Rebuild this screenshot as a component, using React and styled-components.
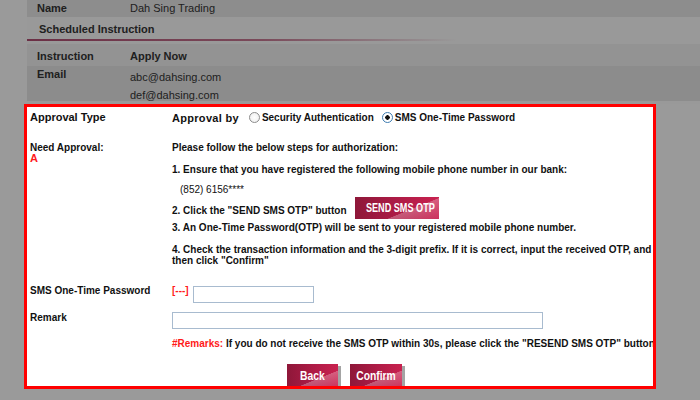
import React from 'react';
import styled, { createGlobalStyle } from 'styled-components';

const GlobalStyle = createGlobalStyle`
  html, body { margin: 0; padding: 0; }
  body {
    font-family: "Liberation Sans", Arial, sans-serif;
    background: #9a9a9a;
  }
`;

const Page = styled.div`
  width: 700px;
  height: 400px;
  overflow: hidden;
  background: #9a9a9a;
`;

// dimmed page behind the highlight box
const Summary = styled.div`
  margin-left: 27px;
  color: #202020;
  font-size: 11px;
`;

const InfoRow = styled.div`
  display: flex;
  height: ${(p) => p.$h}px;
  background: ${(p) => p.$bg};
  padding-left: 10px;
  box-sizing: border-box;
  padding-top: ${(p) => p.$pt || 0}px;
`;

const InfoLabel = styled.div`
  width: 93px;
  font-weight: bold;
  line-height: 13px;
`;

const InfoValue = styled.div`
  line-height: ${(p) => p.$lh || 13}px;
  font-weight: ${(p) => (p.$bold ? 'bold' : 'normal')};
`;

const Section = styled.div`
  height: 27px;
  background: #999;
  padding-top: 6px;
  box-sizing: border-box;
`;

const SectionTitle = styled.div`
  padding-left: 12px;
  font-weight: bold;
  line-height: 13px;
`;

const Underline = styled.div`
  margin-top: 3px;
  height: 2px;
  width: 430px;
  background: linear-gradient(to right, #6b2f45 0%, #7a4a5a 55%, rgba(150, 150, 150, 0) 100%);
`;

const Gap = styled.div`
  height: 3px;
  background: #999;
`;

const Box = styled.div`
  margin-left: 24px;
  width: 632px;
  height: 285px;
  box-sizing: border-box;
  border: 3px solid #ff0000;
  background: #fff;
  overflow: hidden;
  padding-left: 3px;
  color: #111;
`;

const Row = styled.div`
  display: grid;
  grid-template-columns: 142px 1fr;
  align-items: start;
  margin-top: ${(p) => p.$mt}px;
`;

const Label = styled.div`
  font-size: ${(p) => p.$size || 10}px;
  font-weight: bold;
  line-height: ${(p) => p.$lh || 12}px;
  margin-top: ${(p) => p.$mt || 0}px;
  white-space: nowrap;
`;

const RedMark = styled.div`
  color: #ff1a1a;
  font-size: 11px;
  font-weight: bold;
  line-height: 9px;
`;

const Choice = styled.div`
  display: flex;
  align-items: center;
  height: 13px;
  font-size: 10px;
  font-weight: bold;
  white-space: nowrap;
`;

const ChoiceTitle = styled.span`
  font-size: 11px;
  letter-spacing: 0.3px;
  margin-right: 10px;
`;

const Radio = styled.span`
  display: inline-block;
  width: 11px;
  height: 11px;
  box-sizing: border-box;
  border-radius: 50%;
  border: 1px solid ${(p) => (p.$on ? '#3d7bb0' : '#8c8c8c')};
  background: radial-gradient(circle, ${(p) => (p.$on ? '#111 0 2px, #fff 2.5px' : '#fff 0, #ececec 100%')});
  margin-right: 2px;
  margin-left: ${(p) => p.$ml || 0}px;
`;

const Steps = styled.div`
  font-size: 10px;
  font-weight: bold;
`;

const Line = styled.div`
  line-height: ${(p) => p.$lh || 12}px;
  margin-top: ${(p) => p.$mt || 0}px;
  padding-left: ${(p) => p.$indent || 0}px;
  font-weight: ${(p) => (p.$light ? 'normal' : 'bold')};
  white-space: nowrap;
`;

const ButtonLine = styled.div`
  display: flex;
  align-items: flex-start;
  margin-top: 1px;
  white-space: nowrap;
`;

const ButtonText = styled.span`
  padding-top: 8px;
  line-height: 12px;
`;

const Btn = styled.button`
  height: ${(p) => p.$h || 22}px;
  width: ${(p) => p.$w}px;
  margin-left: ${(p) => p.$ml || 0}px;
  padding: 0;
  border: none;
  color: #fff;
  font-family: "Liberation Sans", Arial, sans-serif;
  font-size: ${(p) => p.$fs || 12}px;
  font-weight: bold;
  cursor: pointer;
  background:
    linear-gradient(158deg, rgba(255, 255, 255, 0) 62%, rgba(255, 255, 255, 0.28) 63%, rgba(255, 255, 255, 0.08) 100%),
    linear-gradient(to right, #8e1739 0%, #b01c47 55%, #c9214f 100%);
  box-shadow: ${(p) => (p.$shade ? '3px 2px 0 #a4a4a4' : 'none')};
`;

const Squeeze = styled.span`
  display: inline-block;
  transform: scaleX(${(p) => p.$x || 0.76});
`;

const Field = styled.div`
  display: flex;
  align-items: flex-start;
  font-size: 10px;
  font-weight: bold;
`;

const Prefix = styled.span`
  color: #ff1a1a;
  line-height: 12px;
  margin-top: -1px;
  margin-right: 4px;
`;

const Input = styled.input`
  width: ${(p) => p.$w}px;
  height: 17px;
  box-sizing: border-box;
  border: 1px solid #a8bbcf;
  padding: 0 3px;
  margin: 0;
  outline: none;
`;

const Note = styled.div`
  font-size: 10px;
  font-weight: bold;
  line-height: 12px;
  white-space: nowrap;
`;

const Hash = styled.span`
  color: #ff1a1a;
`;

const Actions = styled.div`
  display: flex;
  justify-content: center;
  gap: 12px;
  margin-top: 14px;
  padding-left: 6px;
`;

export default function App() {
  return (
    <Page>
      <GlobalStyle />
      <Summary>
        <InfoRow $h={17} $bg="#8d8d8d" $pt={2}>
          <InfoLabel>Name</InfoLabel>
          <InfoValue>Dah Sing Trading</InfoValue>
        </InfoRow>
        <Section>
          <SectionTitle>Scheduled Instruction</SectionTitle>
          <Underline />
        </Section>
        <InfoRow $h={22} $bg="#939393" $pt={6}>
          <InfoLabel>Instruction</InfoLabel>
          <InfoValue $bold>Apply Now</InfoValue>
        </InfoRow>
        <InfoRow $h={35} $bg="#8c8c8c" $pt={2}>
          <InfoLabel>Email</InfoLabel>
          <InfoValue $lh={18}>
            abc@dahsing.com
            <br />
            def@dahsing.com
          </InfoValue>
        </InfoRow>
        <Gap />
      </Summary>

      <Box>
        <Row $mt={4}>
          <Label $size={11} $lh={13}>Approval Type</Label>
          <Choice>
            <ChoiceTitle>Approval by</ChoiceTitle>
            <Radio />
            Security Authentication
            <Radio $on $ml={8} />
            SMS One-Time Password
          </Choice>
        </Row>

        <Row $mt={18}>
          <div>
            <Label>Need Approval:</Label>
            <RedMark>A</RedMark>
          </div>
          <Steps>
            <Line>Please follow the below steps for authorization:</Line>
            <Line $mt={10}>1. Ensure that you have registered the following mobile phone number in our bank:</Line>
            <Line $mt={8} $indent={8} $light>(852) 6156****</Line>
            <ButtonLine>
              <ButtonText>2. Click the "SEND SMS OTP" button</ButtonText>
              <Btn $w={84} $ml={8}>
                <Squeeze>SEND SMS OTP</Squeeze>
              </Btn>
            </ButtonLine>
            <Line $mt={3}>3. An One-Time Password(OTP) will be sent to your registered mobile phone number.</Line>
            <Line $mt={10} $lh={11}>
              4. Check the transaction information and the 3-digit prefix. If it is correct, input the received OTP, and
              <br />
              then click "Confirm"
            </Line>
          </Steps>
        </Row>

        <Row $mt={20}>
          <Label $mt={-1}>SMS One-Time Password</Label>
          <Field>
            <Prefix>[---]</Prefix>
            <Input $w={121} />
          </Field>
        </Row>

        <Row $mt={9}>
          <Label>Remark</Label>
          <Field>
            <Input $w={371} />
          </Field>
        </Row>

        <Row $mt={9}>
          <div />
          <Note>
            <Hash>#Remarks:</Hash> If you do not receive the SMS OTP within 30s, please click the "RESEND SMS OTP" button
          </Note>
        </Row>

        <Actions>
          <Btn $w={51} $h={23} $shade>
            <Squeeze $x={0.86}>Back</Squeeze>
          </Btn>
          <Btn $w={52} $h={23} $shade>
            <Squeeze $x={0.86}>Confirm</Squeeze>
          </Btn>
        </Actions>
      </Box>
    </Page>
  );
}
